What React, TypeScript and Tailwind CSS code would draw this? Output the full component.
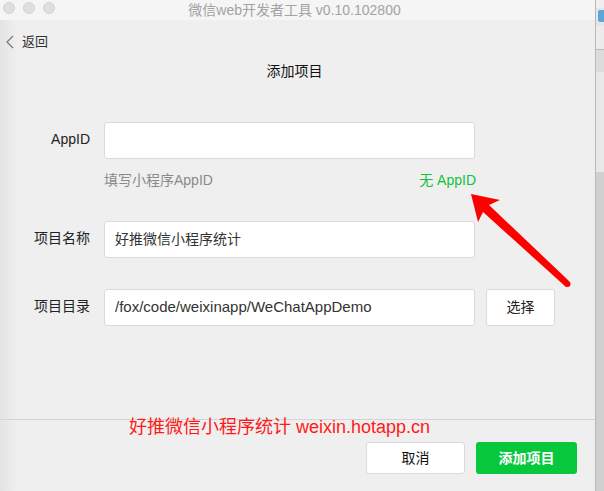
import React from 'react';

const font = "font-['Liberation_Sans','Noto_Sans_CJK_SC',sans-serif]";

const TrafficLight = () => (
  <span className="h-[12px] w-[12px] rounded-full border border-[#d2d2d2] bg-[#dfdfdf]"></span>
);

const Field: React.FC<{ label: string; value?: string; valueClass?: string; children?: React.ReactNode }> = ({
  label,
  value,
  valueClass = 'text-[14px]',
  children,
}) => (
  <div className="flex items-start">
    <div className="w-[90px] pt-[7px] text-right text-[14px] leading-[20px] text-[#222]">{label}</div>
    <div className={`ml-[14px] flex h-[37px] w-[371px] items-center rounded-[3px] border border-[#dadada] bg-white px-[10px] text-[#333] ${valueClass}`}>
      {value}
    </div>
    {children}
  </div>
);

export default function App() {
  return (
    <div className={`flex h-[491px] w-[604px] overflow-hidden ${font}`}>
      <div className="relative flex w-[596px] flex-col border-r border-[#b8b8b8] bg-[linear-gradient(to_right,#e4e4e4,#efefef_18px)]">
        {/* 标题栏 */}
        <div className="relative flex h-[20px] items-center justify-center bg-[#f5f5f5]">
          <div className="absolute left-[3px] top-[2px] flex gap-[8px]">
            <TrafficLight />
            <TrafficLight />
            <TrafficLight />
          </div>
          <span className="pr-[6px] text-[14px] leading-[18px] text-[#a3a3a3]">微信web开发者工具 v0.10.102800</span>
        </div>

        {/* 返回 */}
        <div className="mt-[12px] flex h-[20px] items-center pl-[5px]">
          <svg width="10" height="14" viewBox="0 0 10 14" fill="none">
            <path d="M8 1 L2 7 L8 13" stroke="#777" strokeWidth="1.2" />
          </svg>
          <span className="ml-[7px] text-[13px] text-[#333]">返回</span>
        </div>

        <div className="mt-[9px] h-[20px] pr-[6px] text-center text-[14px] leading-[20px] text-[#111]">添加项目</div>

        {/* 表单 */}
        <div className="mt-[41px] flex flex-col">
          <Field label="AppID" />
          <div className="ml-[104px] mt-[11px] flex w-[372px] justify-between text-[14px] leading-[20px]">
            <span className="text-[#8a8a8a]">填写小程序AppID</span>
            <span className="text-[#0fc23c]">无 AppID</span>
          </div>
          <div className="mt-[31px]">
            <Field label="项目名称" value="好推微信小程序统计" />
          </div>
          <div className="mt-[31px]">
            <Field label="项目目录" value="/fox/code/weixinapp/WeChatAppDemo" valueClass="text-[15px]">
              <button className="ml-[11px] h-[37px] w-[69px] rounded-[3px] border border-[#dadada] bg-white text-[14px] text-[#222]">
                选择
              </button>
            </Field>
          </div>
        </div>

        <div className="flex-1"></div>

        {/* 底部 */}
        <div className="flex justify-end gap-[11px] border-t border-[#d4d4d4] pb-[17px] pr-[18px] pt-[22px]">
          <button className="h-[32px] w-[99px] rounded-[3px] border border-[#dadada] bg-white text-[14px] text-[#111]">取消</button>
          <button className="h-[32px] w-[101px] rounded-[3px] bg-[#07c83c] text-[14px] font-bold text-white">添加项目</button>
        </div>

        {/* 标注 */}
        <div className="absolute left-[129px] top-[416px] text-[18px] leading-[22px] text-[#ff1a1a]">
          好推微信小程序统计 weixin.hotapp.cn
        </div>
        <svg className="absolute left-0 top-0" width="596" height="491" viewBox="0 0 596 491">
          <polygon points="471,194 500,200 489,205 569,281 566,287 483,212 478,222" fill="#ff0000" />
          <circle cx="567.5" cy="284" r="3" fill="#ff0000" />
        </svg>
      </div>

      {/* 右侧露出的窗口 */}
      <div className="flex flex-1 flex-col bg-[#d2d2d2]">
        <div className="h-[8px] bg-[#f0f0f0]"></div>
        <div className="h-[18px] bg-[#e6e6e6]">
          <div className="ml-[2px] mt-[2px] h-[12px] w-[6px] rounded-l-[2px] bg-[#5aa7d8]"></div>
        </div>
        <div className="h-[24px] border-b border-[#bdbdbd] bg-[#ececec]"></div>
        <div className="h-[22px] bg-[#dcdcdc]"></div>
        <div className="h-[100px] bg-[#e8e8e8]"></div>
        <div className="flex-1 bg-[#d0d0d0]"></div>
      </div>
    </div>
  );
}
